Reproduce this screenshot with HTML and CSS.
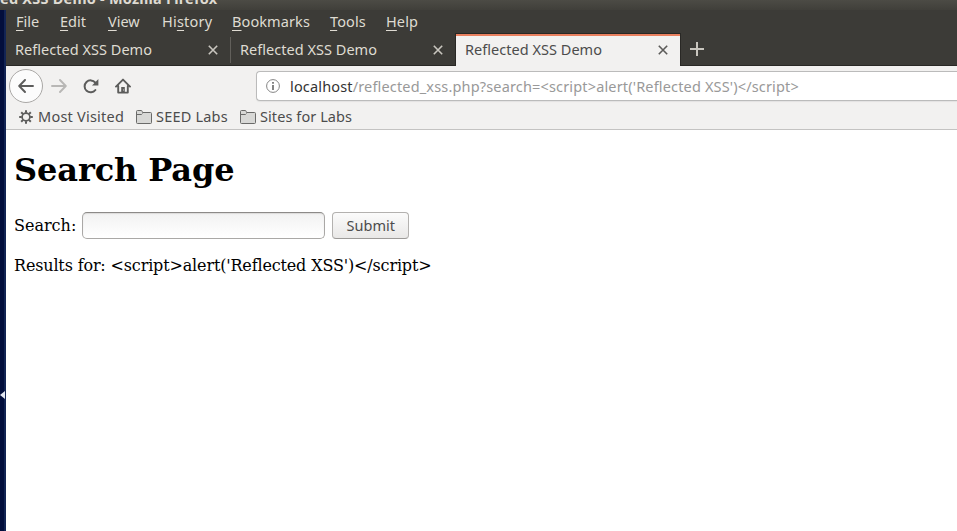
FILE: index.html
```html
<!DOCTYPE html>
<html lang="en">
<head>
<meta charset="utf-8">
<title>Reflected XSS Demo</title>
<link rel="stylesheet" href="styles.css">
</head>
<body>
<header class="titlebar"><span class="title">ed XSS Demo - Mozilla Firefox</span></header>
<div class="workspace">
  <aside class="desktop"><svg class="marker" width="5" height="8" viewBox="0 0 5 8"><path d="M5 0v8L0 4z" fill="#e4e8f2"/></svg></aside>
  <div class="window">
    <nav class="menu">
      <span class="m-file"><u>F</u>ile</span><span class="m-edit"><u>E</u>dit</span><span class="m-view"><u>V</u>iew</span><span class="m-history">Hi<u>s</u>tory</span><span class="m-bookmarks"><u>B</u>ookmarks</span><span class="m-tools"><u>T</u>ools</span><span class="m-help"><u>H</u>elp</span>
    </nav>
    <div class="tabs">
      <div class="tab first"><span>Reflected XSS Demo</span><svg width="10" height="10" viewBox="0 0 10 10"><path d="M.8.8l8.4 8.4M9.2.8L.8 9.2"/></svg></div>
      <div class="tab second"><span>Reflected XSS Demo</span><svg width="10" height="10" viewBox="0 0 10 10"><path d="M.8.8l8.4 8.4M9.2.8L.8 9.2"/></svg></div>
      <div class="tab active"><span>Reflected XSS Demo</span><svg width="10" height="10" viewBox="0 0 10 10"><path d="M.8.8l8.4 8.4M9.2.8L.8 9.2"/></svg></div>
      <svg class="plus" width="14" height="14" viewBox="0 0 14 14"><path d="M7 0v14M0 7h14"/></svg>
    </div>
    <div class="toolbar">
      <div class="back"><svg width="16" height="14" viewBox="0 0 16 14"><path d="M7 1L1.2 7 7 13M1.5 7H15" fill="none" stroke="#5c5c5b" stroke-width="1.9" stroke-linecap="round" stroke-linejoin="round"/></svg></div>
      <svg class="forward" width="16" height="14" viewBox="0 0 16 14"><path d="M9 1l5.8 6L9 13M14.5 7H1" fill="none" stroke="#b8b7b5" stroke-width="1.9" stroke-linecap="round" stroke-linejoin="round"/></svg>
      <svg class="reload" width="16" height="16" viewBox="0 0 16 16"><path d="M12.4 12A6 6 0 1 1 12.3 4.6" fill="none" stroke="#5c5c5b" stroke-width="2" stroke-linecap="round"/><path d="M15.4 1v6.4H9z" fill="#5c5c5b"/></svg>
      <svg class="home" width="16" height="16" viewBox="0 0 16 16"><path d="M1 8.6L8 1.6l7 7M3.2 8v6.6h9.6V8" fill="none" stroke="#5c5c5b" stroke-width="1.9" stroke-linecap="round" stroke-linejoin="round"/><path d="M6.2 15V9h3.6v6z" fill="#5c5c5b"/><path d="M8.2 11.5h.8v1h-.8z" fill="#eee"/></svg>
      <div class="address">
        <svg width="14" height="14" viewBox="0 0 14 14"><circle cx="7" cy="7" r="6.4" fill="none" stroke="#858585"/><path d="M6.1 3h1.8v1.7H6.1zM6.1 6h1.8v5H6.1z" fill="#777"/></svg>
        <span class="host">localhost</span><span class="path">/reflected_xss.php?search=&lt;script&gt;alert('Reflected XSS')&lt;/script&gt;</span>
      </div>
    </div>
    <div class="bookmarks">
      <svg class="gear" width="14" height="14" viewBox="0 0 14 14"><circle cx="7" cy="7" r="3.9" fill="none" stroke="#5c5c5b" stroke-width="1.7"/><path d="M7 .2v2.6M7 11.2v2.6M.2 7h2.6M11.2 7h2.6M2.2 2.2l1.9 1.9M9.9 9.9l1.9 1.9M11.8 2.2l-1.9 1.9M4.1 9.9l-1.9 1.9" stroke="#5c5c5b" stroke-width="2"/></svg>
      <span class="visited">Most Visited</span>
      <svg class="folder" width="16" height="14" viewBox="0 0 16 14"><path d="M.5 12.5v-11q0-1 1-1h3.8q.7 0 .9.9l.3 1.1h8q1 0 1 1v9q0 1-1 1h-13q-1 0-1-1z" fill="#d8d8d6" stroke="#6a6a69"/><path d="M1 4.5h4.5l1-1" fill="none" stroke="#6a6a69"/></svg>
      <span class="seed">SEED Labs</span>
      <svg class="folder" width="16" height="14" viewBox="0 0 16 14"><path d="M.5 12.5v-11q0-1 1-1h3.8q.7 0 .9.9l.3 1.1h8q1 0 1 1v9q0 1-1 1h-13q-1 0-1-1z" fill="#d8d8d6" stroke="#6a6a69"/><path d="M1 4.5h4.5l1-1" fill="none" stroke="#6a6a69"/></svg>
      <span class="sites">Sites for Labs</span>
    </div>
    <main>
      <h1>Search Page</h1>
      <form><label for="q">Search:</label><input id="q" type="text"><button type="button">Submit</button></form>
      <p>Results for: &lt;script&gt;alert('Reflected XSS')&lt;/script&gt;</p>
    </main>
  </div>
</div>
</body>
</html>
```
FILE: styles.css
```css
* { box-sizing: border-box; }
body { margin: 0; height: 531px; overflow: hidden; font: 14.5px/20px "Noto Sans", sans-serif; background: #fff; }
svg { display: block; flex: none; }
span { white-space: nowrap; }
.titlebar { height: 10px; overflow: hidden; display: flex; align-items: flex-end; background: linear-gradient(#4c4b45, #403f3a); color: #dfdbd2; font-weight: bold; }
.title { flex: none; line-height: 20px; margin-bottom: 2px; font-size: 14.5px; letter-spacing: .23px; }
.workspace { display: flex; height: 521px; }
.desktop { width: 6px; background: linear-gradient(90deg, #020e3c 4px, #122454 4px); padding-top: 381px; }
.window { flex: 1; min-width: 0; }
.menu { height: 24px; padding: 1px 0 0 10px; display: flex; background: #3c3b37; color: #dfdbd2; }
.menu span { flex: none; }
.menu u { text-underline-offset: 3px; text-decoration-thickness: 1px; text-decoration-skip-ink: none; }
.m-file { width: 44px; } .m-edit { width: 48px; } .m-view { width: 54px; } .m-history { width: 70px; letter-spacing: .2px; }
.m-bookmarks { width: 98px; letter-spacing: .1px; } .m-tools { width: 56px; } .m-tools, .m-help { letter-spacing: .1px; }
.tabs { height: 32px; display: flex; background: #3c3b37; border-bottom: 1px solid #292825; color: #dfdbd2; }
.tab { height: 32px; padding: 0 12px 2px 9px; display: flex; align-items: center; justify-content: space-between; letter-spacing: .03px; }
.first { width: 224px; }
.tab svg, .plus { fill: none; stroke: #c9c6bf; stroke-width: 1.6; }
.tab svg { margin-top: 1px; }
.tab.second { width: 226px; padding-right: 13px; border-left: 1px solid #62605b; border-image: linear-gradient(transparent 4px, #62605b 4px, #62605b 28px, transparent 28px) 1; border-width: 0 0 0 1px; }
.tab.active { width: 224px; background: #f2f1f0; color: #4c4c4c; border-top: 2px solid #e9805f; padding-bottom: 4px; box-shadow: 0 0 0 1px #292825; clip-path: inset(-1px -1px 0 -1px); }
.tab.active svg { stroke: #5c5b59; }
.plus { margin: 8px 0 0 10px; stroke-width: 2; }
.toolbar { height: 40px; display: flex; align-items: center; background: #f2f1f0; padding-left: 3px; }
.back { width: 34px; height: 34px; border: 1px solid #aaa8a6; border-radius: 50%; background: #fcfcfc; display: flex; align-items: center; justify-content: center; }
.forward { margin-left: 8px; }
.reload { margin-left: 16px; }
.home { margin-left: 16px; }
.address { height: 30px; flex: 1; min-width: 0; margin-left: 125px; border: 1px solid #bbb; border-right: 0; border-radius: 4px 0 0 4px; background: #fff; display: flex; align-items: center; padding-left: 9px; box-shadow: 0 1px 1px #e3e2e1; letter-spacing: .16px; }
.host { margin-left: 10px; color: #333; }
.path { color: #999; }
.bookmarks { height: 24px; display: flex; align-items: center; background: #f2f1f0; border-bottom: 1px solid #c4c3c2; padding: 0 0 2px 13px; color: #4c4c4c; }
.bookmarks span { margin-top: -2px; }
.visited { margin-left: 5px; width: 98px; letter-spacing: .23px; }
.seed { margin-left: 4px; width: 84px; letter-spacing: .2px; }
.sites { margin-left: 4px; letter-spacing: .08px; }
main { padding: 0 8px; font: 16px/19px "DejaVu Serif", serif; color: #000; }
h1 { font-size: 32px; line-height: 38px; margin: 0; padding-top: 21px; letter-spacing: -.1px; }
form { display: flex; align-items: center; margin-top: 23px; height: 27px; }
input { width: 243px; height: 27px; margin: 0 7px 0 6px; border: 1px solid #aaa8a6; border-top-color: #8c8a88; border-radius: 5px; background: linear-gradient(#f2f2f2, #fff); box-shadow: inset 0 1px 1px #dcdbda; }
button { width: 77px; height: 27px; padding: 0 0 1px; border: 1px solid #b3b1af; border-bottom-color: #9c9a98; border-radius: 4px; background: linear-gradient(#fbfbfb, #e9e8e7); color: #4c4c4c; font: 14.5px/20px "Noto Sans", sans-serif; }
p { margin: 17px 0 0; letter-spacing: -.155px; }
```
